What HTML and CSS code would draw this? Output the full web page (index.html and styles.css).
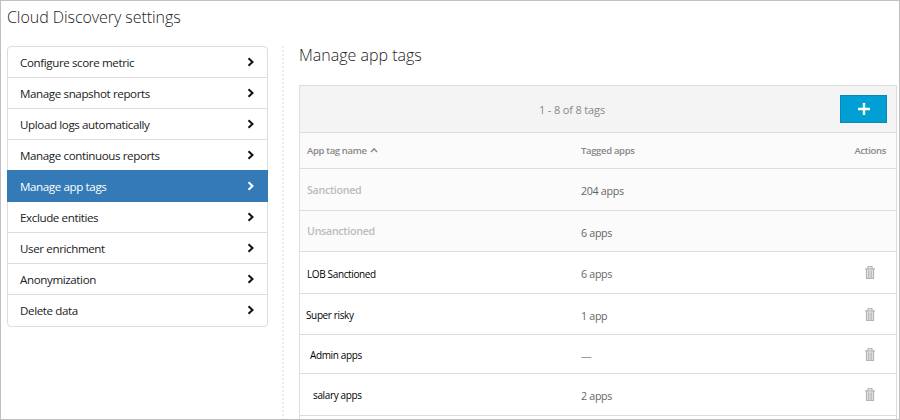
FILE: index.html
```html
<!DOCTYPE html>
<html lang="en">
<head>
<meta charset="utf-8">
<title>Cloud Discovery settings</title>
<link rel="stylesheet" href="styles.css">
</head>
<body>
<svg width="0" height="0" class="defs">
  <symbol id="chev" viewBox="0 0 8 10"><path d="M1.5 1.2 5.5 5 1.5 8.8" fill="none" stroke="currentColor" stroke-width="2"/></symbol>
  <symbol id="trash" viewBox="0 0 10 13"><path d="M0 2.9H10M3 2.5V.7H7V2.5M1.5 3V12.3H8.5V3M3.8 4.5V11.5M6.2 4.5V11.5" fill="none" stroke="currentColor" stroke-width="1.2"/><path d="M1.5 3h7v9h-7z" fill="currentColor" opacity=".35"/></symbol>
</svg>
<div class="page">
  <h1>Cloud Discovery settings</h1>
  <div class="columns">
    <nav>
      <a><span>Configure score metric</span><svg><use href="#chev"/></svg></a>
      <a><span>Manage snapshot reports</span><svg><use href="#chev"/></svg></a>
      <a><span>Upload logs automatically</span><svg><use href="#chev"/></svg></a>
      <a><span>Manage continuous reports</span><svg><use href="#chev"/></svg></a>
      <a class="active"><span>Manage app tags</span><svg><use href="#chev"/></svg></a>
      <a><span>Exclude entities</span><svg><use href="#chev"/></svg></a>
      <a><span>User enrichment</span><svg><use href="#chev"/></svg></a>
      <a><span>Anonymization</span><svg><use href="#chev"/></svg></a>
      <a><span>Delete data</span><svg><use href="#chev"/></svg></a>
    </nav>
    <main>
      <h2>Manage app tags</h2>
      <section class="table">
        <div class="toolbar"><span class="count">1 - 8 of 8 tags</span><button aria-label="Add tag"><svg viewBox="0 0 12 12"><path d="M6 0V12M0 6H12" stroke="#fff" stroke-width="2.4"/></svg></button></div>
        <div class="row head"><span class="name">App tag name <svg class="sort" viewBox="0 0 8 6"><path d="M1 5 4 1.7 7 5" fill="none" stroke="currentColor" stroke-width="1.4"/></svg></span><span class="apps">Tagged apps</span><span class="act">Actions</span></div>
        <div class="row builtin"><span class="name">Sanctioned</span><span class="apps">204 apps</span></div>
        <div class="row builtin short"><span class="name">Unsanctioned</span><span class="apps">6 apps</span></div>
        <div class="row"><span class="name">LOB Sanctioned</span><span class="apps">6 apps</span><svg class="bin"><use href="#trash"/></svg></div>
        <div class="row short risky"><span class="name">Super risky</span><span class="apps">1 app</span><svg class="bin"><use href="#trash"/></svg></div>
        <div class="row admin"><span class="name">Admin apps</span><span class="apps none">—</span><svg class="bin"><use href="#trash"/></svg></div>
        <div class="row salary"><span class="name">salary apps</span><span class="apps">2 apps</span><svg class="bin"><use href="#trash"/></svg></div>
      </section>
    </main>
  </div>
</div>
</body>
</html>
```
FILE: styles.css
```css
* { box-sizing: border-box; }
body { margin: 0; font-family: "Open Sans", "Noto Sans", sans-serif; }
.defs { display: block; height: 0; }
.page { height: 420px; border: 1px solid #c0c0c0; padding: 4px 2px 0 7px; overflow: hidden; background: #fff; }
h1, h2 { margin: 0; font-weight: 300; font-size: 16px; line-height: 24px; color: #222; white-space: nowrap; }
h1 { letter-spacing: -.06px; margin-left: -1px; }
.columns { display: flex; padding-top: 17px; }
nav { width: 261px; height: 281px; margin-left: -1px; flex: none; display: grid; grid-template-rows: repeat(9, 1fr); border: 1px solid #ddd; border-radius: 4px; }
nav a { display: flex; align-items: center; justify-content: space-between; padding: 3px 12px 0 12px; border-bottom: 1px solid #ddd; font-size: 11.6px; color: #222; letter-spacing: -.39px; line-height: 18px; }
nav a span { margin-top: -2px; }
nav a:last-child { border-bottom: 0; }
nav a svg { width: 8px; height: 10px; margin-top: -4px; color: #111; }
nav a.active { background: #337ab7; color: #fff; margin: -1px -1px 0; padding: 4px 13px 0 13px; border-color: #337ab7; }
nav a.active svg { color: #fff; }
main { flex: 1; margin-left: 14px; padding: 0 0 0 15px; height: 374px; border-left: 2px dotted #eee; }
h2 { margin-top: -3px; }
.table { margin-top: 18px; height: 340px; border: 1px solid #ddd; border-bottom: 0; }
.toolbar { height: 47px; display: flex; align-items: center; justify-content: flex-end; padding-right: 9px; background: #f4f4f4; border-bottom: 1px solid #ddd; color: #888; }
.count { font-size: 11px; letter-spacing: -.15px; margin: 1px 235px 0 0; }
button { width: 47px; height: 28px; padding: 0; margin: 0; border: 1px solid #0b86b5; background: #009fd4; display: grid; place-items: center; }
button svg { width: 12px; height: 12px; }
.row { height: 42px; display: grid; grid-template-columns: 274px 1fr auto; align-items: center; padding: 0 10px 0 7px; border-bottom: 1px solid #ddd; font-size: 10.7px; line-height: 16px; color: #666; letter-spacing: -.31px; }
.row.short { height: 41px; }
.row.head { height: 36px; background: #fbfbfb; font-size: 9.5px; font-weight: 600; color: #888; letter-spacing: -.34px; }
.sort { width: 8px; height: 6px; vertical-align: 1px; margin-left: 1px; }
.builtin { background: #fbfbfb; }
.builtin .name { font-weight: 600; color: #bbb; }
.name { color: #000; }
.head .name { color: #888; }
.row:not(.head) .apps { padding-top: 3px; }
.apps.none { color: #999; }
.row:not(.head):not(.builtin) .name { font-size: 10px; padding-top: 2px; letter-spacing: -.37px; }
.bin { width: 10px; height: 13px; margin-right: 11px; color: #b5b5b5; }
.risky .name { margin-left: -1px; }
.row.admin { height: 39px; }
.admin .name { margin-left: 3px; }
.row.admin .name { padding-top: 5px; }
.salary .name { margin-left: 6px; }
.row.salary .name { margin-top: -2px; padding-top: 0; }
```
